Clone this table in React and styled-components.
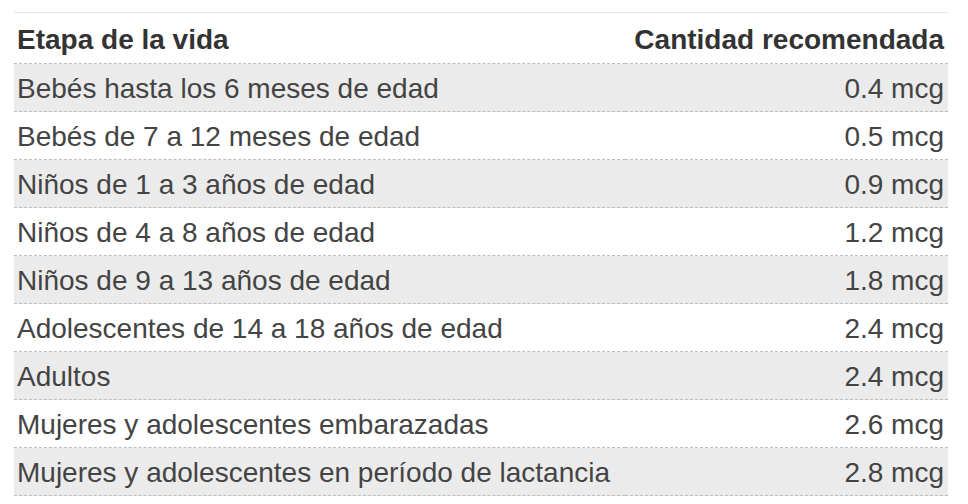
import React from 'react'
import styled, { createGlobalStyle } from 'styled-components';

const GlobalStyle = createGlobalStyle`
    html, body {
        margin: 0;
        padding: 0;
        background: #fff;
    }
    body {
        font-family: "Liberation Sans", Arial, Helvetica, sans-serif;
    }
`;

const rows = [
    ["Bebés hasta los 6 meses de edad", "0.4 mcg"],
    ["Bebés de 7 a 12 meses de edad", "0.5 mcg"],
    ["Niños de 1 a 3 años de edad", "0.9 mcg"],
    ["Niños de 4 a 8 años de edad", "1.2 mcg"],
    ["Niños de 9 a 13 años de edad", "1.8 mcg"],
    ["Adolescentes de 14 a 18 años de edad", "2.4 mcg"],
    ["Adultos", "2.4 mcg"],
    ["Mujeres y adolescentes embarazadas", "2.6 mcg"],
    ["Mujeres y adolescentes en período de lactancia", "2.8 mcg"],
];

const App = () => {
    return (
        <>
            <GlobalStyle />
            <StyledPage>
                <StyledTable>
                    <thead>
                        <tr>
                            <StyledHead>Etapa de la vida</StyledHead>
                            <StyledHead $right>Cantidad recomendada</StyledHead>
                        </tr>
                    </thead>
                    <tbody>
                        {rows.map(([stage, amount], i) => (
                            <StyledRow key={stage} $striped={i % 2 === 0}>
                                <StyledCell>{stage}</StyledCell>
                                <StyledCell $right>{amount}</StyledCell>
                            </StyledRow>
                        ))}
                    </tbody>
                </StyledTable>
            </StyledPage>
        </>
    )
}

const StyledPage = styled.div`
    padding: 12px 20px 0 14px;
`;
const StyledTable = styled.table`
    width: 934px;
    border-collapse: collapse;
    border-top: 1px solid #e6e6e6;
`;
const StyledHead = styled.th`
    padding: 3px 4px 0 3px;
    line-height: 47px;
    text-align: ${(p) => (p.$right ? 'right' : 'left')};
    font-size: 28px;
    font-weight: 700;
    color: #333;
    border-bottom: 1px dashed #bdbdbd;
    white-space: nowrap;
`;
const StyledRow = styled.tr`
    background: ${(p) => (p.$striped ? '#ebebeb' : '#fff')};
`;
const StyledCell = styled.td`
    padding: 2px 4px 0 3px;
    line-height: 45px;
    text-align: ${(p) => (p.$right ? 'right' : 'left')};
    font-size: 28px;
    color: #444;
    border-bottom: 1px dashed #bdbdbd;
    white-space: nowrap;
`;

export default App
